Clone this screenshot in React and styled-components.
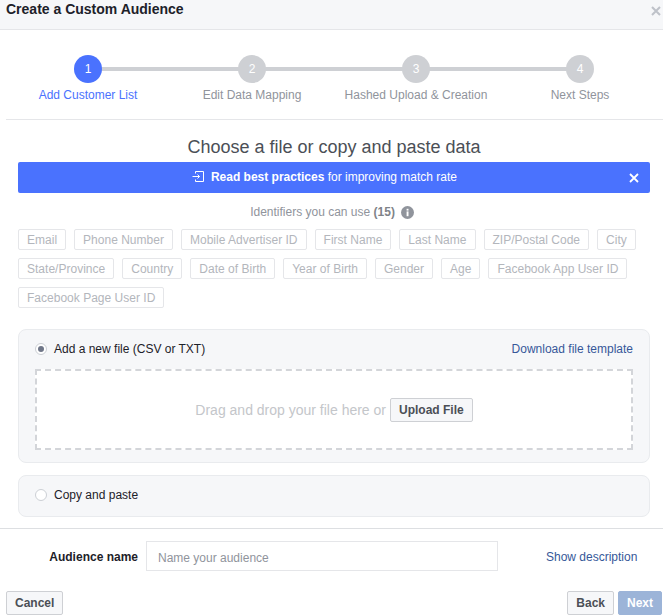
import React from "react";
import styled, { createGlobalStyle } from "styled-components";

const GlobalStyle = createGlobalStyle`
  html, body {
    margin: 0;
    padding: 0;
    background: #fff;
  }
  * {
    box-sizing: border-box;
  }
`;

const Dialog = styled.div`
  width: 663px;
  height: 616px;
  overflow: hidden;
  font-family: "Liberation Sans", Arial, sans-serif;
  font-size: 12px;
  color: #1d2129;
  background: #fff;
`;

const Header = styled.div`
  height: 30px;
  display: flex;
  justify-content: space-between;
  padding: 1px 2px 0 6px;
  background: #f6f7f9;
  border-bottom: 1px solid #e5e6e9;
`;

const Title = styled.div`
  font-size: 14px;
  line-height: 16px;
  font-weight: bold;
  color: #1d2129;
`;

const HeaderClose = styled.span`
  color: #bec2c9;
  display: flex;
  padding-top: 5px;
`;

const Stepper = styled.div`
  height: 90px;
  margin-left: 6px;
  padding-top: 25px;
  display: grid;
  grid-template-columns: repeat(4, 164px);
  border-bottom: 1px solid #e5e6e9;
`;

const Step = styled.div`
  position: relative;
  display: flex;
  flex-direction: column;
  align-items: center;
  color: ${(p) => (p.$active ? "#4a72fe" : "#90949c")};

  &::before {
    content: ${(p) => (p.$first ? "none" : '""')};
    position: absolute;
    top: 12px;
    left: -82px;
    width: 164px;
    height: 4px;
    background: #ced0d4;
  }
`;

const StepDot = styled.div`
  position: relative;
  z-index: 1;
  width: 28px;
  height: 28px;
  border-radius: 50%;
  background: ${(p) => (p.$active ? "#4a72fe" : "#ced0d4")};
  color: #fff;
  display: flex;
  align-items: center;
  justify-content: center;
  font-size: 12px;
`;

const StepLabel = styled.div`
  margin-top: 5px;
  line-height: 15px;
  white-space: nowrap;
`;

const Body = styled.div`
  padding: 0 13px 0 18px;
`;

const Heading = styled.h2`
  margin: 16px 0 4px;
  font-size: 18px;
  line-height: 22px;
  font-weight: normal;
  text-align: center;
  color: #4b4f56;
`;

const Banner = styled.div`
  position: relative;
  height: 31px;
  display: flex;
  align-items: center;
  justify-content: center;
  gap: 6px;
  padding: 0 19px 2px 0;
  border-radius: 2px;
  background: #4a72fe;
  color: #fff;
  strong {
    font-weight: bold;
  }
`;

const BannerClose = styled.span`
  position: absolute;
  right: 11px;
  top: 11px;
  display: flex;
`;

const Identifiers = styled.div`
  margin-top: 12px;
  padding-right: 4px;
  display: flex;
  align-items: center;
  justify-content: center;
  gap: 6px;
  line-height: 15px;
  color: #90949c;
  strong {
    color: #7f8389;
  }
`;

const InfoDot = styled.span`
  width: 13px;
  height: 13px;
  display: flex;
`;

const Tags = styled.div`
  margin-top: 9px;
  display: flex;
  flex-wrap: wrap;
  gap: 8px;
`;

const Tag = styled.span`
  height: 21px;
  padding: 0 8px;
  display: flex;
  align-items: center;
  border: 1px solid #e5e6e9;
  border-radius: 2px;
  color: #b3b6bc;
  letter-spacing: 0.012px;
  white-space: nowrap;
`;

const Panel = styled.div`
  margin-top: ${(p) => p.$mt}px;
  padding: 0 16px;
  border: 1px solid #e9ebee;
  border-radius: 8px;
  background: #f6f7f9;
`;

const PanelRow = styled.div`
  height: ${(p) => p.$h}px;
  display: flex;
  align-items: center;
  justify-content: space-between;
  padding-bottom: ${(p) => p.$pb || 0}px;
`;

const RadioLabel = styled.label`
  display: flex;
  align-items: center;
  gap: 7px;
  color: #1d2129;
`;

const Radio = styled.span`
  width: 12px;
  height: 12px;
  border: 1px solid #ccd0d5;
  border-radius: 50%;
  background: #fff;
  display: flex;
  align-items: center;
  justify-content: center;
  &::after {
    content: "";
    width: 6px;
    height: 6px;
    border-radius: 50%;
    background: ${(p) => (p.$checked ? "#6f7688" : "transparent")};
  }
`;

const LinkText = styled.a`
  color: #365899;
  white-space: nowrap;
`;

const DropZone = styled.div`
  height: 81px;
  margin-bottom: 12px;
  display: flex;
  align-items: center;
  justify-content: center;
  gap: 4px;
  border: 2px dashed #d3d5d9;
  background: #fff;
  color: #c4c6ca;
  font-size: 14px;
`;

const Button = styled.button`
  height: 24px;
  padding: 0 8px;
  border: 1px solid ${(p) => (p.$primary ? "#9cb4d8" : "#ced0d4")};
  border-radius: 2px;
  background: ${(p) => (p.$primary ? "#9cb4d8" : "#f6f7f9")};
  color: ${(p) => (p.$primary ? "#fff" : "#4b4f56")};
  font-family: inherit;
  font-size: 12px;
  font-weight: bold;
`;

const Footer = styled.div`
  margin-top: 11px;
  border-top: 1px solid #dddfe2;
`;

const NameRow = styled.div`
  margin-top: 12px;
  display: flex;
  align-items: center;
`;

const NameLabel = styled.label`
  width: 146px;
  padding: 2px 8px 0 0;
  text-align: right;
  font-weight: bold;
  color: #1d2129;
`;

const NameInput = styled.input`
  width: 352px;
  height: 30px;
  padding: 4px 11px 0;
  border: 1px solid #e5e6e9;
  font-family: inherit;
  font-size: 12px;
  &::placeholder {
    color: #90949c;
    opacity: 1;
  }
`;

const ShowDescription = styled(LinkText)`
  margin-left: 48px;
  padding-top: 2px;
`;

const Actions = styled.div`
  margin-top: 20px;
  padding: 0 1px 0 6px;
  display: flex;
  justify-content: space-between;
`;

const ActionGroup = styled.div`
  display: flex;
  gap: 4px;
`;

const steps = ["Add Customer List", "Edit Data Mapping", "Hashed Upload & Creation", "Next Steps"];

const tags = [
  "Email", "Phone Number", "Mobile Advertiser ID", "First Name", "Last Name",
  "ZIP/Postal Code", "City", "State/Province", "Country", "Date of Birth",
  "Year of Birth", "Gender", "Age", "Facebook App User ID", "Facebook Page User ID",
];

const CloseIcon = ({ size, stroke }) => (
  <svg width={size} height={size} viewBox="0 0 10 10">
    <path d="M1 1l8 8M9 1l-8 8" stroke="currentColor" strokeWidth={stroke} fill="none" />
  </svg>
);

const App = () => (
  <Dialog>
    <GlobalStyle />
    <Header>
      <Title>Create a Custom Audience</Title>
      <HeaderClose><CloseIcon size={10} stroke={2} /></HeaderClose>
    </Header>

    <Stepper>
      {steps.map((label, i) => (
        <Step key={label} $active={i === 0} $first={i === 0}>
          <StepDot $active={i === 0}>{i + 1}</StepDot>
          <StepLabel>{label}</StepLabel>
        </Step>
      ))}
    </Stepper>

    <Body>
      <Heading>Choose a file or copy and paste data</Heading>
      <Banner>
        <svg width="13" height="13" viewBox="0 0 13 13" fill="none" stroke="#fff" strokeWidth="1">
          <path d="M3.5 3.5V1.5h8v10h-8v-2" />
          <path d="M0.5 6.5h7M5.5 4.5l2 2-2 2" />
        </svg>
        <span><strong>Read best practices</strong> for improving match rate</span>
        <BannerClose><CloseIcon size={10} stroke={1.8} /></BannerClose>
      </Banner>

      <Identifiers>
        <span>Identifiers you can use <strong>(15)</strong></span>
        <InfoDot>
          <svg width="13" height="13" viewBox="0 0 13 13">
            <circle cx="6.5" cy="6.5" r="6.5" fill="#90949c" />
            <rect x="5.6" y="5.4" width="1.9" height="4.8" fill="#fff" />
            <rect x="5.6" y="2.8" width="1.9" height="1.8" fill="#fff" />
          </svg>
        </InfoDot>
      </Identifiers>

      <Tags>
        {tags.map((t) => <Tag key={t}>{t}</Tag>)}
      </Tags>

      <Panel $mt={21}>
        <PanelRow $h={39} $pb={2}>
          <RadioLabel><Radio $checked />Add a new file (CSV or TXT)</RadioLabel>
          <LinkText>Download file template</LinkText>
        </PanelRow>
        <DropZone>
          Drag and drop your file here or
          <Button>Upload File</Button>
        </DropZone>
      </Panel>

      <Panel $mt={12}>
        <PanelRow $h={40} $pb={2}>
          <RadioLabel><Radio />Copy and paste</RadioLabel>
        </PanelRow>
      </Panel>
    </Body>

    <Footer>
      <NameRow>
        <NameLabel>Audience name</NameLabel>
        <NameInput placeholder="Name your audience" />
        <ShowDescription>Show description</ShowDescription>
      </NameRow>
      <Actions>
        <Button>Cancel</Button>
        <ActionGroup>
          <Button>Back</Button>
          <Button $primary>Next</Button>
        </ActionGroup>
      </Actions>
    </Footer>
  </Dialog>
);

export default App;
